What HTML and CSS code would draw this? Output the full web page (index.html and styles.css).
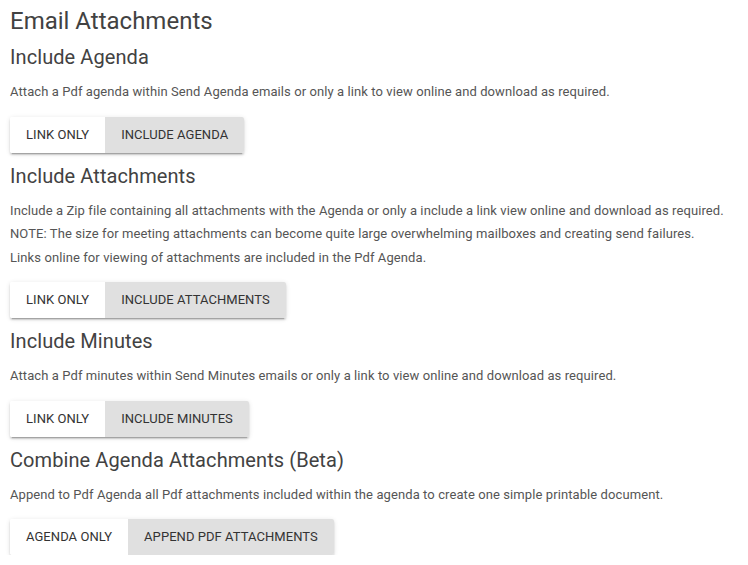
FILE: index.html
```html
<!DOCTYPE html>
<html>
<head>
<meta charset="utf-8">
<link rel="stylesheet" href="styles.css">
</head>
<body>
<div class="page">
  <h1 class="title">Email Attachments</h1>

  <section class="setting">
    <h2 class="setting-title">Include Agenda</h2>
    <p class="setting-desc">Attach a Pdf agenda within Send Agenda emails or only a link to view online and download as required.</p>
    <div class="toggle-group">
      <button class="toggle">LINK ONLY</button>
      <button class="toggle checked">INCLUDE AGENDA</button>
    </div>
  </section>

  <section class="setting">
    <h2 class="setting-title">Include Attachments</h2>
    <p class="setting-desc">Include a Zip file containing all attachments with the Agenda or only a include a link view online and download as required.<br>NOTE: The size for meeting attachments can become quite large overwhelming mailboxes and creating send failures.<br>Links online for viewing of attachments are included in the Pdf Agenda.</p>
    <div class="toggle-group">
      <button class="toggle">LINK ONLY</button>
      <button class="toggle checked">INCLUDE ATTACHMENTS</button>
    </div>
  </section>

  <section class="setting">
    <h2 class="setting-title">Include Minutes</h2>
    <p class="setting-desc">Attach a Pdf minutes within Send Minutes emails or only a link to view online and download as required.</p>
    <div class="toggle-group">
      <button class="toggle">LINK ONLY</button>
      <button class="toggle checked">INCLUDE MINUTES</button>
    </div>
  </section>

  <section class="setting">
    <h2 class="setting-title">Combine Agenda Attachments (Beta)</h2>
    <p class="setting-desc">Append to Pdf Agenda all Pdf attachments included within the agenda to create one simple printable document.</p>
    <div class="toggle-group">
      <button class="toggle">AGENDA ONLY</button>
      <button class="toggle checked">APPEND PDF ATTACHMENTS</button>
    </div>
  </section>
</div>
</body>
</html>
```

FILE: styles.css
```css
html, body {
  margin: 0;
  padding: 0;
  background: #ffffff;
}

body {
  font-family: Roboto, "Helvetica Neue", sans-serif;
  color: #424242;
}

.page {
  padding: 7px 10px 0 10px;
  display: flex;
  flex-direction: column;
}

.title {
  margin: 0;
  font-size: 24px;
  line-height: 28px;
  font-weight: 400;
  color: #424242;
}

.setting {
  display: flex;
  flex-direction: column;
  align-items: flex-start;
  margin-top: 11px;
}

.setting:first-of-type {
  margin-top: 10px;
}

.setting-title {
  margin: 0;
  font-size: 20px;
  line-height: 24px;
  font-weight: 400;
  letter-spacing: 0.08px;
  color: #424242;
}

.setting-desc {
  margin: 11px 0 0 0;
  font-size: 13px;
  line-height: 23.5px;
  letter-spacing: 0.09px;
  color: #555555;
}

.toggle-group {
  display: flex;
  margin-top: 13px;
  border-radius: 2px;
  overflow: hidden;
  box-shadow: 0 3px 1px -2px rgba(0,0,0,0.2), 0 2px 2px 0 rgba(0,0,0,0.14), 0 1px 5px 0 rgba(0,0,0,0.12);
}

.toggle {
  border: none;
  margin: 0;
  padding: 0 16px;
  height: 36px;
  line-height: 36px;
  background: #ffffff;
  color: #333333;
  font-family: Roboto, "Helvetica Neue", sans-serif;
  font-size: 13px;
  font-weight: 400;
  letter-spacing: 0.05px;
  cursor: pointer;
}

.toggle.checked {
  background: #e0e0e0;
  color: #333333;
}
```
